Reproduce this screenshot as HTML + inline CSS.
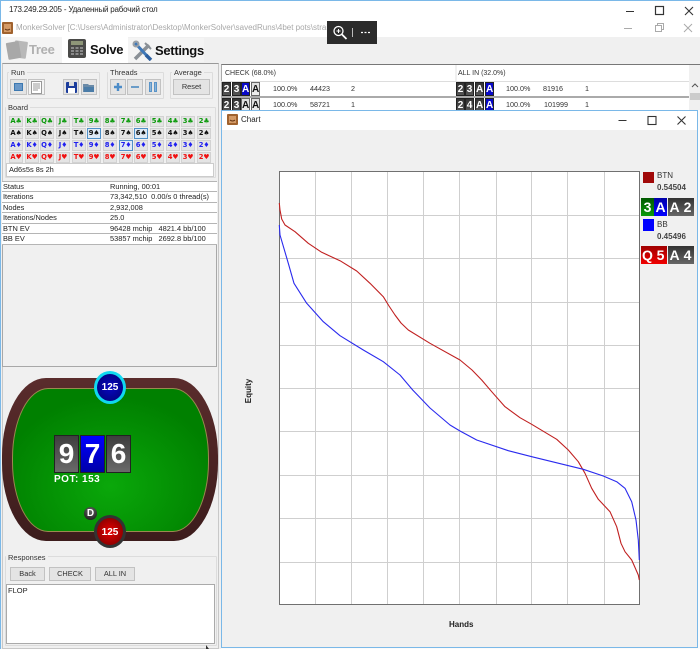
<!DOCTYPE html>
<html><head><meta charset="utf-8">
<style>
html,body{margin:0;padding:0;background:#fff}
#r{position:relative;width:700px;height:649px;overflow:hidden;background:#f0f0f0;font-family:"Liberation Sans","Noto Sans CJK JP",sans-serif;font-size:7.5px;color:#222;filter:blur(.3px)}
#r div{position:absolute;box-sizing:border-box;white-space:nowrap}
.g{border:1px solid #dcdcdc;border-radius:1px}
.gl{background:#f0f0f0;padding:0 2px;font-size:7.5px;line-height:9px;color:#333}
.btn{background:#e4e4e4;border:1px solid #c2c2c2;text-align:center;color:#333;font-size:7.4px}
.b{width:14px;height:11px;background:#e4e4e4;border:1px solid #d2d2d2;font-family:"DejaVu Sans",sans-serif;font-size:6.8px;font-weight:bold;line-height:9px;text-align:center;letter-spacing:-.1px}
.gr{color:#0a9a0a}.bk{color:#111}.bl{color:#2020f0}.rd{color:#f01010}
.hl{background:#dfeaf6;border:1px solid #4f90c8}
.row{left:2px;width:215px;background:#fff;border-bottom:1px solid #b5b5b5;font-size:7.4px;line-height:10px}
.row span{position:absolute;top:0}
.mc{width:9px;height:14px;background:linear-gradient(#333,#555);color:#fff;font-weight:bold;font-size:10px;line-height:13px;text-align:center;border:1px solid #222}
.mc.w{background:linear-gradient(#ddd,#eee);color:#111;border:1px solid #666}
.mc.u{background:#0808c8}
.t{font-size:7.2px;line-height:10px;color:#333}
.card{top:435px;width:25px;height:38px;border:1px solid #222;color:#fff;font-weight:bold;font-size:28px;line-height:36px;text-align:center;background:linear-gradient(#3e3e3e,#6a6a6a)}
.lc{width:13px;height:18px;color:#fff;font-weight:bold;font-size:14px;line-height:18px;text-align:center;background:linear-gradient(#333,#666)}
.tab{font-size:13px;font-weight:bold;line-height:16px;letter-spacing:-.3px;color:#111}
</style></head><body>
<div id="r">
<div style="left:0;top:0;width:700px;height:37px;background:#fff"></div>
<div style="left:0;top:0;width:700px;height:1px;background:#7ab8e8"></div>
<div style="left:0;top:0;width:1px;height:649px;background:#7ab8e8"></div>
<div style="left:9px;top:4px;font-size:8px;letter-spacing:-.2px;line-height:12px;color:#222">173.249.29.205 - Удаленный рабочий стол</div>
<svg style="position:absolute;left:620px;top:3px" width="75" height="16" fill="none" stroke="#333" stroke-width="1"><path d="M6 8.500h8"/><rect x="35.500" y="3.500" width="8" height="8" stroke-width="1.200"/><path d="M65 4l8 8M73 4l-8 8" stroke-width="1.100"/></svg>
<svg style="position:absolute;left:2px;top:22px" width="11" height="12"><rect width="11" height="12" rx="1" fill="#a0622e"/><rect x="2" y="2" width="7" height="8" fill="#d49a66"/><path d="M3 7q2.500 2 5 0" stroke="#603010" fill="none"/></svg>
<div style="left:16px;top:22px;width:311px;overflow:hidden;font-size:8px;line-height:12px;color:#a8a8a8">MonkerSolver [C:\Users\Administrator\Desktop\MonkerSolver\savedRuns\4bet pots\straight</div>
<svg style="position:absolute;left:620px;top:20px" width="75" height="16" fill="none" stroke="#aaa"><path d="M4 8.500h8"/><path d="M35.500 5.500h6v6h-6zM37.500 5V3.500h6v6H42"/><path d="M64 4l8 8M72 4l-8 8"/></svg>
<div style="left:327px;top:21px;width:50px;height:23px;background:#2b2b2b"></div>
<svg style="position:absolute;left:330px;top:23px" width="46" height="19" fill="none" stroke="#fff"><circle cx="8.500" cy="8" r="4.500" stroke-width="1.300"/><path d="M12 11.500l4.500 4.500" stroke-width="1.800"/><path d="M6.500 8h4M8.500 6v4"/><path d="M22.500 5v9" stroke="#bbb"/><path d="M31 9.500h2M34.500 9.500h2M38 9.500h2" stroke-width="1.300"/></svg>

<!-- tabs -->
<div style="left:2px;top:37px;width:60px;height:25px;background:#f4f4f4"></div>
<div style="left:62px;top:37px;width:66px;height:26px;background:#fff"></div>
<div style="left:128px;top:38px;width:76px;height:24px;background:#f4f4f4"></div>
<svg style="position:absolute;left:5px;top:39px" width="24" height="22"><rect x="9" y="2" width="13" height="17" rx="1" fill="#b8b8b8" transform="rotate(8 15 10)"/><rect x="2" y="3" width="13" height="17" rx="1" fill="#a8a8a8" transform="rotate(-10 8 11)"/></svg>
<div class="tab" style="left:29px;top:42px;color:#b0b0b0">Tree</div>
<svg style="position:absolute;left:68px;top:38px" width="20" height="22"><rect width="18" height="19" y="1" rx="2" fill="#4a4a48"/><rect x="3" y="3" width="12" height="4" fill="#8e9678"/><g fill="#8a8a8a"><rect x="3" y="9" width="3" height="2"/><rect x="7.500" y="9" width="3" height="2"/><rect x="12" y="9" width="3" height="2"/><rect x="3" y="12" width="3" height="2"/><rect x="7.500" y="12" width="3" height="2"/><rect x="12" y="12" width="3" height="2"/><rect x="3" y="15" width="3" height="2"/><rect x="7.500" y="15" width="3" height="2"/><rect x="12" y="15" width="3" height="2"/></g></svg>
<div class="tab" style="left:90px;top:42px">Solve</div>
<svg style="position:absolute;left:132px;top:40px" width="22" height="21" fill="none"><path d="M3 19L17 5" stroke="#8a9096" stroke-width="3.500"/><path d="M13 3l6 6" stroke="#8a9096" stroke-width="2"/><path d="M3 3l13 14" stroke="#3f78b8" stroke-width="3"/><path d="M14 15l5 5" stroke="#2c5f9f" stroke-width="3.500"/><circle cx="4" cy="4" r="2.500" stroke="#9aa0a6" stroke-width="2"/></svg>
<div class="tab" style="left:155px;top:43px">Settings</div>

<!-- left panel -->
<div style="left:2px;top:63px;width:217px;height:586px;background:#f0f0f0;border:1px solid #c8c8c8;border-top:1px solid #999"></div>
<div class="g" style="left:7px;top:72px;width:93px;height:27px"></div>
<div class="gl" style="left:9px;top:68px">Run</div>
<div class="g" style="left:107px;top:72px;width:57px;height:27px"></div>
<div class="gl" style="left:108px;top:68px">Threads</div>
<div class="g" style="left:170px;top:72px;width:43px;height:27px"></div>
<div class="gl" style="left:172px;top:68px">Average</div>
<div class="btn" style="left:10px;top:79px;width:17px;height:16px"></div><div style="left:14px;top:83px;width:9px;height:8px;background:#6a98c8;border:1px solid #3c78b0"></div>
<div class="btn" style="left:28px;top:79px;width:17px;height:16px;background:#f4f4f4"></div>
<svg style="position:absolute;left:31px;top:81px" width="11" height="13" fill="none" stroke="#999"><rect x=".5" y=".5" width="10" height="12" fill="#fff"/><path d="M2 3h7M2 5h7M2 7h7M2 9h5"/></svg>
<div class="btn" style="left:63px;top:79px;width:16px;height:16px"></div>
<svg style="position:absolute;left:66px;top:82px" width="11" height="11"><rect width="11" height="11" rx="1" fill="#1c3d9c"/><rect x="3" y="0" width="5" height="4" fill="#ddd"/><rect x="2" y="6" width="7" height="5" fill="#fff"/></svg>
<div class="btn" style="left:81px;top:79px;width:16px;height:16px"></div>
<svg style="position:absolute;left:83px;top:82px" width="12" height="11"><path d="M0 2h5l1 1h5v7H0z" fill="#6b8ba8"/><path d="M1 5h10v5H1z" fill="#4a7ca8"/></svg>
<div class="btn" style="left:110px;top:79px;width:16px;height:16px"></div>
<svg style="position:absolute;left:113px;top:82px" width="10" height="10" fill="none" stroke="#4c8cc8" stroke-width="2.400"><path d="M5 1v8M1 5h8"/></svg>
<div class="btn" style="left:127px;top:79px;width:16px;height:16px"></div>
<svg style="position:absolute;left:130px;top:82px" width="10" height="10" fill="none" stroke="#6a9cc8" stroke-width="2"><path d="M1 5h8"/></svg>
<div class="btn" style="left:145px;top:79px;width:16px;height:16px"></div>
<svg style="position:absolute;left:148px;top:82px" width="10" height="10" fill="#8ab4d8" stroke="#5a94c8"><rect x="1.500" y=".5" width="2" height="9"/><rect x="6.500" y=".5" width="2" height="9"/></svg>
<div class="btn" style="left:173px;top:79px;width:37px;height:16px;line-height:14px">Reset</div>

<div class="g" style="left:5px;top:107px;width:211px;height:71px"></div>
<div class="gl" style="left:6px;top:103px">Board</div>

<div class="b gr" style="left:9px;top:116px">A♣</div><div class="b gr" style="left:25px;top:116px">K♣</div><div class="b gr" style="left:40px;top:116px">Q♣</div><div class="b gr" style="left:56px;top:116px">J♣</div><div class="b gr" style="left:72px;top:116px">T♣</div><div class="b gr" style="left:87px;top:116px">9♣</div><div class="b gr" style="left:103px;top:116px">8♣</div><div class="b gr" style="left:119px;top:116px">7♣</div><div class="b gr" style="left:134px;top:116px">6♣</div><div class="b gr" style="left:150px;top:116px">5♣</div><div class="b gr" style="left:166px;top:116px">4♣</div><div class="b gr" style="left:181px;top:116px">3♣</div><div class="b gr" style="left:197px;top:116px">2♣</div>
<div class="b bk" style="left:9px;top:128px">A♠</div><div class="b bk" style="left:25px;top:128px">K♠</div><div class="b bk" style="left:40px;top:128px">Q♠</div><div class="b bk" style="left:56px;top:128px">J♠</div><div class="b bk" style="left:72px;top:128px">T♠</div><div class="b bk hl" style="left:87px;top:128px">9♠</div><div class="b bk" style="left:103px;top:128px">8♠</div><div class="b bk" style="left:119px;top:128px">7♠</div><div class="b bk hl" style="left:134px;top:128px">6♠</div><div class="b bk" style="left:150px;top:128px">5♠</div><div class="b bk" style="left:166px;top:128px">4♠</div><div class="b bk" style="left:181px;top:128px">3♠</div><div class="b bk" style="left:197px;top:128px">2♠</div>
<div class="b bl" style="left:9px;top:140px">A♦</div><div class="b bl" style="left:25px;top:140px">K♦</div><div class="b bl" style="left:40px;top:140px">Q♦</div><div class="b bl" style="left:56px;top:140px">J♦</div><div class="b bl" style="left:72px;top:140px">T♦</div><div class="b bl" style="left:87px;top:140px">9♦</div><div class="b bl" style="left:103px;top:140px">8♦</div><div class="b bl hl" style="left:119px;top:140px">7♦</div><div class="b bl" style="left:134px;top:140px">6♦</div><div class="b bl" style="left:150px;top:140px">5♦</div><div class="b bl" style="left:166px;top:140px">4♦</div><div class="b bl" style="left:181px;top:140px">3♦</div><div class="b bl" style="left:197px;top:140px">2♦</div>
<div class="b rd" style="left:9px;top:152px">A♥</div><div class="b rd" style="left:25px;top:152px">K♥</div><div class="b rd" style="left:40px;top:152px">Q♥</div><div class="b rd" style="left:56px;top:152px">J♥</div><div class="b rd" style="left:72px;top:152px">T♥</div><div class="b rd" style="left:87px;top:152px">9♥</div><div class="b rd" style="left:103px;top:152px">8♥</div><div class="b rd" style="left:119px;top:152px">7♥</div><div class="b rd" style="left:134px;top:152px">6♥</div><div class="b rd" style="left:150px;top:152px">5♥</div><div class="b rd" style="left:166px;top:152px">4♥</div><div class="b rd" style="left:181px;top:152px">3♥</div><div class="b rd" style="left:197px;top:152px">2♥</div>
<div style="left:6px;top:163px;width:208px;height:14px;background:#fff;border:1px solid #ccc;font-size:7.4px;line-height:12px;padding-left:2px">Ad6s5s 8s 2h</div>

<div style="left:2px;top:181px;width:215px;height:186px;border:1px solid #a8a8a8;background:#f0f0f0"></div>
<div class="row" style="top:181px;border-top:1px solid #b5b5b5;height:11px"><span style="left:1px">Status</span><span style="left:108px">Running, 00:01</span></div>
<div class="row" style="top:192px;height:11px"><span style="left:1px">Iterations</span><span style="left:108px">73,342,510&nbsp; 0.00/s 0 thread(s)</span></div>
<div class="row" style="top:203px;height:10px"><span style="left:1px">Nodes</span><span style="left:108px">2,932,008</span></div>
<div class="row" style="top:213px;height:11px"><span style="left:1px">Iterations/Nodes</span><span style="left:108px">25.0</span></div>
<div class="row" style="top:224px;height:10px"><span style="left:1px">BTN EV</span><span style="left:108px">96428 mchip&nbsp;&nbsp; 4821.4 bb/100</span></div>
<div class="row" style="top:234px;height:11px"><span style="left:1px">BB EV</span><span style="left:108px">53857 mchip&nbsp;&nbsp; 2692.8 bb/100</span></div>

<!-- poker table -->
<div style="left:2px;top:378px;width:216px;height:163px;border-radius:44px/78px;background:linear-gradient(#5a2c2c,#3c1c1c)"></div>
<div style="left:12px;top:388px;width:197px;height:144px;border-radius:36px/70px;border:1px solid #9a8a50;background:radial-gradient(ellipse 110px 90px at 50% 68%,#0aa80a,#008000)"></div>
<div style="left:94px;top:371px;width:32px;height:33px;border-radius:50%;background:radial-gradient(circle,#0808c0,#000070);border:3px solid #10d8f0;color:#fff;font-weight:bold;font-size:10px;line-height:27px;text-align:center">125</div>
<div class="card" style="left:54px">9</div>
<div class="card" style="left:80px;background:linear-gradient(#0000ff,#0000a8)">7</div>
<div class="card" style="left:106px">6</div>
<div style="left:54px;top:474px;color:#fff;font-weight:bold;font-size:10px;line-height:12px;letter-spacing:.5px">POT: 153</div>
<div style="left:84px;top:507px;width:13px;height:13px;border-radius:50%;background:radial-gradient(circle at 50% 30%,#666,#111);color:#fff;font-weight:bold;font-size:10px;line-height:13px;text-align:center">D</div>
<div style="left:94px;top:515px;width:32px;height:33px;border-radius:50%;background:radial-gradient(circle,#e80000,#700000);border:3px solid #333;color:#fff;font-weight:bold;font-size:10px;line-height:30px;text-align:center">125</div>

<!-- responses -->
<div class="g" style="left:5px;top:556px;width:212px;height:90px"></div>
<div class="gl" style="left:6px;top:553px">Responses</div>
<div class="btn" style="left:10px;top:567px;width:35px;height:14px;line-height:12px">Back</div>
<div class="btn" style="left:49px;top:567px;width:42px;height:14px;line-height:12px">CHECK</div>
<div class="btn" style="left:95px;top:567px;width:40px;height:14px;line-height:12px">ALL IN</div>
<div style="left:6px;top:584px;width:209px;height:60px;background:#fff;border:1px solid #aaa;padding:1px;line-height:10px">FLOP</div>
<svg style="position:absolute;left:204px;top:645px" width="6" height="4"><path d="M2 0v4h3z" fill="#333"/></svg>

<!-- top table -->
<div style="left:221px;top:64px;width:479px;height:50px;background:#fff;border-top:1px solid #777;border-left:1px solid #aaa"></div>
<div style="left:455px;top:65px;width:2px;height:16px;background:#f0f0f0"></div>
<div style="left:689px;top:65px;width:11px;height:50px;background:#f0f0f0"></div>
<div class="t" style="left:225px;top:69px;font-size:7px">CHECK (68.0%)</div>
<div class="t" style="left:458px;top:69px;font-size:7px">ALL IN (32.0%)</div>
<div style="left:221px;top:81px;width:468px;height:1px;background:#ddd"></div>
<div style="left:221px;top:96px;width:468px;height:2px;background:#aaa"></div>
<div class="mc" style="left:222px;top:82px">2</div><div class="mc" style="left:232px;top:82px">3</div><div class="mc u" style="left:241px;top:82px">A</div><div class="mc w" style="left:251px;top:82px">A</div>
<div class="t" style="left:273px;top:84px">100.0%</div><div class="t" style="left:310px;top:84px">44423</div><div class="t" style="left:351px;top:84px">2</div>
<div class="mc" style="left:222px;top:98px">2</div><div class="mc" style="left:232px;top:98px">3</div><div class="mc w" style="left:241px;top:98px">A</div><div class="mc w" style="left:251px;top:98px">A</div>
<div class="t" style="left:273px;top:100px">100.0%</div><div class="t" style="left:310px;top:100px">58721</div><div class="t" style="left:351px;top:100px">1</div>
<div class="mc" style="left:456px;top:82px">2</div><div class="mc" style="left:465px;top:82px">3</div><div class="mc" style="left:475px;top:82px">A</div><div class="mc u" style="left:485px;top:82px">A</div>
<div class="t" style="left:506px;top:84px">100.0%</div><div class="t" style="left:543px;top:84px">81916</div><div class="t" style="left:585px;top:84px">1</div>
<div class="mc" style="left:456px;top:98px">2</div><div class="mc" style="left:465px;top:98px">4</div><div class="mc" style="left:475px;top:98px">A</div><div class="mc u" style="left:485px;top:98px">A</div>
<div class="t" style="left:506px;top:100px">100.0%</div><div class="t" style="left:544px;top:100px">101999</div><div class="t" style="left:585px;top:100px">1</div>
<svg style="position:absolute;left:691px;top:83px" width="8" height="6" fill="none" stroke="#555"><path d="M1 4l3-3 3 3"/></svg>
<div style="left:690px;top:93px;width:10px;height:7px;background:#ccc"></div>

<!-- chart window -->
<div style="left:697px;top:110px;width:3px;height:539px;background:#fbfbfb"></div>
<div style="left:221px;top:647px;width:479px;height:2px;background:#fbfbfb"></div>
<div style="left:221px;top:110px;width:477px;height:538px;background:#f0f0f0;border:1px solid #7ab8e8"></div>
<div style="left:222px;top:111px;width:475px;height:19px;background:#fff"></div>
<svg style="position:absolute;left:227px;top:114px" width="11" height="11"><rect width="11" height="11" rx="1" fill="#a0622e"/><rect x="2" y="2" width="7" height="7" fill="#d49a66"/><path d="M3 6q2.500 2 5 0" stroke="#603010" fill="none"/></svg>
<div style="left:241px;top:114px;font-size:8px;line-height:12px;color:#222">Chart</div>
<svg style="position:absolute;left:615px;top:112px" width="80" height="16" fill="none" stroke="#333"><path d="M3.500 8.500h8"/><rect x="33" y="4.500" width="8" height="8" stroke-width="1.100"/><path d="M62.500 4.500l8 8M70.500 4.500l-8 8" stroke-width="1.100"/></svg>

<svg style="position:absolute;left:270px;top:165px" width="380" height="445">
<rect x="9.500" y="6.500" width="360" height="433" fill="#fff"/>
<g stroke="#cfcfcf" fill="none">
<path d="M45.500 7v432M81.500 7v432M117.500 7v432M153.500 7v432M189.500 7v432M226.500 7v432M261.500 7v432M297.500 7v432M334.500 7v432"/>
<path d="M10 50.500h359M10 93.500h359M10 137.500h359M10 180.500h359M10 223.500h359M10 266.500h359M10 310.500h359M10 353.500h359M10 397.500h359"/>
</g>
<rect x="9.500" y="6.500" width="360" height="433" fill="none" stroke="#707070"/>
<g transform="translate(-270,-165)" fill="none" stroke-width="1.100" stroke-linejoin="round">
<polyline stroke="#c02020" points="279.300,203 280,210 281.700,219 285,225 295,231.700 308.300,243.300 321.700,252.300 340,260.700 356.700,271 370,283.300 383.300,296.700 389,306 395,315 401,323 408.300,330 430,343.300 460,360 472,370 481.700,380 491.700,391.700 505,406.700 520,417.700 531.700,424.300 556.700,439.300 568.300,450 578.300,461.700 585,473.300 591.700,488.300 598.300,499.300 610,511.700 616.700,526.700 621,543.300 625,551.700 631.700,560 638.300,575 639.300,580"/>
<polyline stroke="#2a2aee" points="279.300,225 280,235 288.300,263.300 294,283.300 306.700,303.300 323.300,321.700 340,335.700 363.300,350 383.300,361.700 400,375 412.700,390 430,408 450,425 460,431 476.700,440 508.300,450.700 531.700,456.700 583.300,469.300 603.300,476 616.700,481.700 625,488.300 631.700,501.700 636,520 638.300,540 639.300,560"/>
</g>
</svg>

<div style="left:643px;top:172px;width:11px;height:11px;background:#a00808"></div>
<div style="left:657px;top:171px;font-size:8px;line-height:10px;color:#333">BTN</div>
<div style="left:657px;top:183px;font-size:8px;font-weight:bold;line-height:10px;color:#444">0.54504</div>
<div class="lc" style="left:641px;top:198px;background:linear-gradient(#005800,#0a9a0a)">3</div>
<div class="lc" style="left:654px;top:198px;background:linear-gradient(#0000a8,#0000ff)">A</div>
<div class="lc" style="left:668px;top:198px">A</div>
<div class="lc" style="left:681px;top:198px">2</div>
<div style="left:643px;top:219px;width:11px;height:12px;background:#0000ff"></div>
<div style="left:657px;top:220px;font-size:8px;line-height:10px;color:#333">BB</div>
<div style="left:657px;top:232px;font-size:8px;font-weight:bold;line-height:10px;color:#444">0.45496</div>
<div class="lc" style="left:641px;top:246px;background:linear-gradient(#a00000,#f00000)">Q</div>
<div class="lc" style="left:654px;top:246px;background:linear-gradient(#a00000,#f00000)">5</div>
<div class="lc" style="left:668px;top:246px">A</div>
<div class="lc" style="left:681px;top:246px">4</div>

<div style="left:449px;top:620px;font-size:8px;font-weight:bold;line-height:10px;color:#222">Hands</div>
<div style="left:234px;top:386px;width:30px;text-align:center;font-size:8px;font-weight:bold;line-height:10px;color:#222;transform:rotate(-90deg)">Equity</div>
</div>
</body></html>
